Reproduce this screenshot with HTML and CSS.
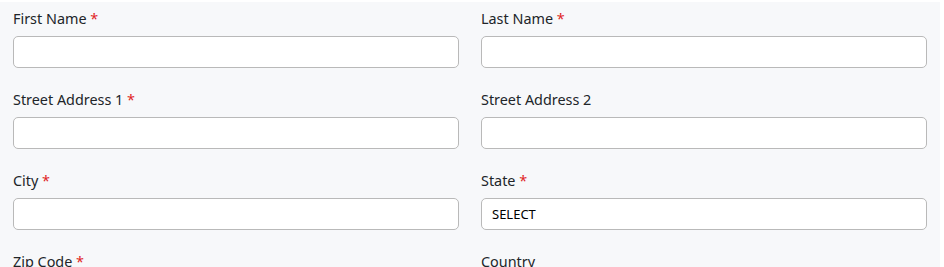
FILE: index.html
```html
<!DOCTYPE html>
<html lang="en">
<head>
<meta charset="UTF-8">
<meta name="viewport" content="width=device-width, initial-scale=1.0">
<title>Address Form</title>
<link rel="stylesheet" href="styles.css">
</head>
<body>

<form class="address-form">
    <div class="field">
        <label for="firstName">First Name <span class="req">*</span></label>
        <input type="text" id="firstName" name="firstName">
    </div>
    <div class="field">
        <label for="lastName">Last Name <span class="req">*</span></label>
        <input type="text" id="lastName" name="lastName">
    </div>
    <div class="field">
        <label for="street1">Street Address 1 <span class="req">*</span></label>
        <input type="text" id="street1" name="street1">
    </div>
    <div class="field">
        <label for="street2">Street Address 2</label>
        <input type="text" id="street2" name="street2">
    </div>
    <div class="field">
        <label for="city">City <span class="req">*</span></label>
        <input type="text" id="city" name="city">
    </div>
    <div class="field">
        <label for="state">State <span class="req">*</span></label>
        <select id="state" name="state">
            <option>SELECT</option>
        </select>
    </div>
    <div class="field">
        <label for="zip">Zip Code <span class="req">*</span></label>
        <input type="text" id="zip" name="zip">
    </div>
    <div class="field">
        <label for="country">Country</label>
        <input type="text" id="country" name="country">
    </div>
</form>

</body>
</html>
```

FILE: styles.css
```css
body {
    font-family: "Noto Sans", "Open Sans", sans-serif;
    background-color: #fff;
    margin: 0;
    padding: 2px 4px 0 0;
    color: #212529;
}

.address-form {
    display: grid;
    grid-template-columns: 1fr 1fr;
    column-gap: 22px;
    row-gap: 21px;
    padding: 6px 13px 20px 13px;
    background-color: #f7f8fa;
}

.field label {
    display: block;
    font-size: 14.4px;
    line-height: 21px;
    margin-bottom: 7px;
}

.req {
    color: #e02424;
}

.field input,
.field select {
    display: block;
    width: 100%;
    height: 32px;
    box-sizing: border-box;
    border: 1px solid #b9b9b9;
    border-radius: 5px;
    background-color: #fff;
    font-family: inherit;
    font-size: 13px;
    color: #000;
    padding: 0 10px;
}

.field select {
    appearance: none;
    -webkit-appearance: none;
}
```
